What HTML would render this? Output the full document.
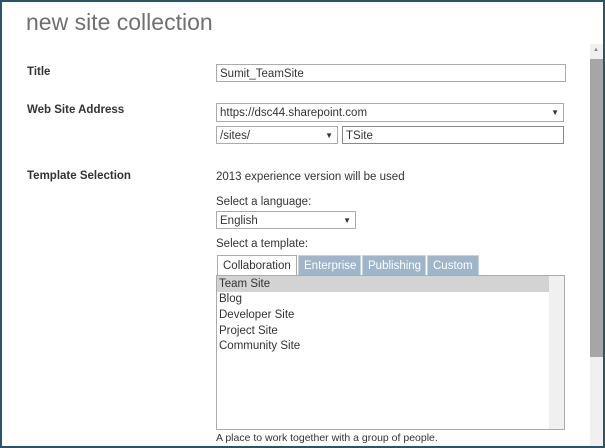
<!DOCTYPE html>
<html><head><style>
*{margin:0;padding:0;box-sizing:border-box}
body{width:605px;height:448px;overflow:hidden;background:#fff;font-family:"Liberation Sans",sans-serif;font-size:11.5px;color:#333;position:relative}
.frame{position:absolute;inset:0;border:2px solid #2a5566;z-index:5}
.a{position:absolute;white-space:nowrap}
.lbl{font-weight:bold;color:#333;font-size:11.5px}
.box{position:absolute;border:1px solid #ababab;background:#fff;padding:3px 3px 1px;font-size:11.5px;color:#333;line-height:12px}
.arr{position:absolute;right:4px;top:3px;font-size:8px}
.tab{position:absolute;top:255px;height:20px;background:#9fb5c9;color:#fff;font-size:11.5px;padding:4px 5px;border:1px solid #c8d4de;border-bottom:none}
</style></head><body>
<div class="frame"></div>
<div class="a" style="left:26px;top:9px;font-size:23px;color:#707070;">new site collection</div>
<div class="a lbl" style="left:27px;top:66px">Title</div>
<div class="a lbl" style="left:27px;top:104px">Web Site Address</div>
<div class="a lbl" style="left:27px;top:170px">Template Selection</div>
<div class="box" style="left:216px;top:64px;width:350px;height:18px">Sumit_TeamSite</div>
<div class="box" style="left:216px;top:103px;width:348px;height:19px">https://dsc44.sharepoint.com<span class="arr">▼</span></div>
<div class="box" style="left:216px;top:126px;width:122px;height:18px">/sites/<span class="arr">▼</span></div>
<div class="box" style="left:342px;top:126px;width:222px;height:18px;border-color:#888">TSite</div>
<div class="a" style="left:216px;top:171px">2013 experience version will be used</div>
<div class="a" style="left:216px;top:196px">Select a language:</div>
<div class="box" style="left:216px;top:211px;width:140px;height:18px">English<span class="arr">▼</span></div>
<div class="a" style="left:216px;top:238px">Select a template:</div>
<div class="tab" style="left:217px;width:80px;background:#fff;color:#333;border-color:#ababab;height:21px">Collaboration</div>
<div class="tab" style="left:298px;width:63px">Enterprise</div>
<div class="tab" style="left:362px;width:64px">Publishing</div>
<div class="tab" style="left:427px;width:52px">Custom</div>
<div style="position:absolute;left:216px;top:275px;width:349px;height:155px;border:1px solid #ababab;background:#fff">
 <div style="position:absolute;left:0;top:0;width:332px;height:16px;background:#d3d3d3"></div>
 <div style="position:absolute;right:0;top:0;width:15px;height:153px;background:#f0f0f0"></div>
 <div class="a" style="left:2px;top:2px">Team Site</div>
 <div class="a" style="left:2px;top:17px">Blog</div>
 <div class="a" style="left:2px;top:33px">Developer Site</div>
 <div class="a" style="left:2px;top:49px">Project Site</div>
 <div class="a" style="left:2px;top:64px">Community Site</div>
</div>
<div class="a" style="left:216px;top:432px;font-size:10.5px">A place to work together with a group of people.</div>
<div style="position:absolute;left:590px;top:44px;width:13px;height:402px;background:#f0f0f0"></div>
<div class="a" style="left:593px;top:47px;font-size:6px;color:#888">▲</div>
<div style="position:absolute;left:590px;top:59px;width:13px;height:298px;background:#a6a6a6"></div>
</body></html>
